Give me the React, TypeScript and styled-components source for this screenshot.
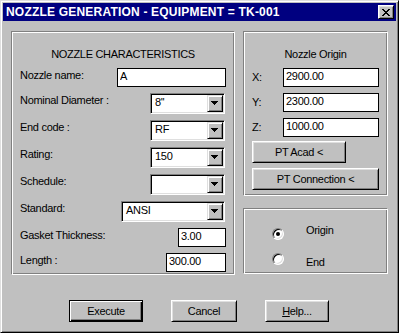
import React from 'react'
import styled, { createGlobalStyle } from 'styled-components'

const GlobalStyle = createGlobalStyle`
  html, body {
    margin: 0;
    padding: 0;
    background: #c0c0c0;
  }
  * {
    box-sizing: border-box;
  }
`

const Window = styled.div`
  width: 399px;
  height: 333px;
  display: flex;
  flex-direction: column;
  padding: 2px;
  background: #c0c0c0;
  border: 1px solid;
  border-color: #dfdfdf #000 #000 #dfdfdf;
  box-shadow: inset 1px 1px #fff, inset -1px -1px #808080;
  font-family: 'Liberation Sans', Arial, sans-serif;
  font-size: 11px;
  letter-spacing: -0.3px;
  color: #000;
`

const TitleBar = styled.div`
  height: 18px;
  flex: none;
  display: flex;
  align-items: center;
  padding: 0 2px 0 3px;
  background: #000080;
`

const Title = styled.span`
  flex: 1;
  color: #fff;
  font-size: 12px;
  font-weight: bold;
  letter-spacing: 0.2px;
  line-height: 18px;
  white-space: nowrap;
`

const CloseButton = styled.button`
  width: 16px;
  height: 14px;
  padding: 0;
  display: flex;
  align-items: center;
  justify-content: center;
  background: #c0c0c0;
  border: 1px solid;
  border-color: #fff #000 #000 #fff;
  box-shadow: inset 1px 1px #dfdfdf, inset -1px -1px #808080;
`

const Body = styled.div`
  flex: 1;
  display: flex;
  flex-direction: column;
  padding: 10px 8px 0;
`

const Columns = styled.div`
  display: flex;
  gap: 8px;
`

const RightColumn = styled.div`
  width: 145px;
  flex: none;
  display: flex;
  flex-direction: column;
  gap: 12px;
`

// etched frame, no caption on the line
const GroupBox = styled.div<{ $width?: number; $height: number; $pad: string }>`
  width: ${p => (p.$width ? `${p.$width}px` : 'auto')};
  height: ${p => p.$height}px;
  flex: none;
  display: flex;
  flex-direction: column;
  padding: ${p => p.$pad};
  border: 1px solid;
  border-color: #808080 #fff #fff #808080;
  box-shadow: inset 1px 1px #fff, inset -1px -1px #808080;
`

const Heading = styled.div`
  text-align: center;
  line-height: 13px;
  margin-bottom: 7px;
  white-space: nowrap;
`

const Fields = styled.div`
  display: flex;
  flex-direction: column;
  gap: 6px;
`

const FieldRow = styled.div<{ $center?: boolean }>`
  display: flex;
  align-items: ${p => (p.$center ? 'center' : 'flex-start')};
`

const Label = styled.span<{ $top?: number }>`
  line-height: 13px;
  padding-top: ${p => p.$top ?? 0}px;
  white-space: nowrap;
`

const TextBox = styled.input<{ $width: number }>`
  width: ${p => p.$width}px;
  height: 19px;
  flex: none;
  margin: 0 0 0 auto;
  padding: 0 1px 4px 2px;
  border: 1px solid #000;
  border-radius: 0;
  background: #fff;
  outline: none;
  font: inherit;
  letter-spacing: inherit;
  color: #000;
`

const Combo = styled.div<{ $width: number }>`
  width: ${p => p.$width}px;
  height: 21px;
  flex: none;
  margin: 0 1px 0 auto;
  padding: 1px;
  display: flex;
  background: #fff;
  border: 1px solid;
  border-color: #808080 #fff #fff #808080;
  box-shadow: inset 1px 1px #000, inset -1px -1px #dfdfdf;
`

const ComboValue = styled.span`
  flex: 1;
  padding: 1px 0 0 3px;
  line-height: 13px;
  white-space: nowrap;
`

const ComboButton = styled.span`
  width: 16px;
  height: 17px;
  flex: none;
  display: flex;
  align-items: flex-start;
  padding: 5px 0 0 3px;
  background: #c0c0c0;
  border: 1px solid;
  border-color: #dfdfdf #000 #000 #dfdfdf;
  box-shadow: inset 1px 1px #fff, inset -1px -1px #808080;

  svg {
    display: block;
  }
`

const ButtonStack = styled.div`
  display: flex;
  flex-direction: column;
  gap: 5px;
  margin-top: 4px;
`

const PushButton = styled.button<{ $width: number; $default?: boolean }>`
  width: ${p => p.$width}px;
  height: 22px;
  flex: none;
  padding: 0;
  background: #c0c0c0;
  font: inherit;
  letter-spacing: inherit;
  color: #000;
  border: 1px solid;
  border-color: ${p => (p.$default ? '#000' : '#fff #000 #000 #fff')};
  box-shadow: ${p =>
    p.$default
      ? 'inset 1px 1px #fff, inset -1px -1px #000, inset -2px -2px #808080'
      : 'inset 1px 1px #dfdfdf, inset -1px -1px #808080'};
`

const RadioList = styled.div`
  display: flex;
  flex-direction: column;
  gap: 13px;
`

const RadioRow = styled.div`
  display: flex;
  align-items: flex-start;
  height: 12px;
`

const RadioDot = styled.span<{ $checked?: boolean }>`
  width: 12px;
  height: 12px;
  flex: none;
  display: flex;
  align-items: center;
  justify-content: center;
  border-radius: 50%;
  background: #fff;
  border: 1px solid;
  border-color: #808080 #fff #fff #808080;
  box-shadow: inset 1px 1px #000, inset -1px -1px #dfdfdf;

  &::after {
    content: '';
    display: ${p => (p.$checked ? 'block' : 'none')};
    width: 4px;
    height: 4px;
    border-radius: 50%;
    background: #000;
  }
`

const RadioText = styled.span<{ $shift: number }>`
  margin: ${p => p.$shift}px 0 0 22px;
  line-height: 13px;
`

const ButtonRow = styled.div`
  display: flex;
  gap: 28px;
  margin-top: 25px;
  padding-left: 58px;
`

const CloseGlyph = () => (
  <svg width="8" height="7" viewBox="0 0 8 7" shapeRendering="crispEdges">
    <path
      fill="#000"
      d="M0 0h2v1H0zM6 0h2v1H6zM1 1h2v1H1zM5 1h2v1H5zM2 2h4v1H2zM3 3h2v1H3zM2 4h4v1H2zM1 5h2v1H1zM5 5h2v1H5zM0 6h2v1H0zM6 6h2v1H6z"
    />
  </svg>
)

const DownArrow = () => (
  <svg width="7" height="4" viewBox="0 0 7 4" shapeRendering="crispEdges">
    <path fill="#000" d="M0 0h7v1H0zM1 1h5v1H1zM2 2h3v1H2zM3 3h1v1H3z" />
  </svg>
)

type Field = {
  label: string
  kind: 'input' | 'select'
  value: string
  width: number
}

const characteristics: Field[] = [
  { label: 'Nozzle name:', kind: 'input', value: 'A', width: 109 },
  { label: 'Nominal Diameter :', kind: 'select', value: "8''", width: 75 },
  { label: 'End code :', kind: 'select', value: 'RF', width: 75 },
  { label: 'Rating:', kind: 'select', value: '150', width: 75 },
  { label: 'Schedule:', kind: 'select', value: '', width: 75 },
  { label: 'Standard:', kind: 'select', value: 'ANSI', width: 104 },
  { label: 'Gasket Thickness:', kind: 'input', value: '3.00', width: 48 },
  { label: 'Length :', kind: 'input', value: '300.00', width: 60 },
]

const origin = [
  { label: 'X:', value: '2900.00' },
  { label: 'Y:', value: '2300.00' },
  { label: 'Z:', value: '1000.00' },
]

const App = () => {
  return (
    <>
      <GlobalStyle />
      <Window>
        <TitleBar>
          <Title>NOZZLE GENERATION - EQUIPMENT = TK-001</Title>
          <CloseButton aria-label="Close">
            <CloseGlyph />
          </CloseButton>
        </TitleBar>

        <Body>
          <Columns>
            <GroupBox $width={224} $height={244} $pad="16px 8px 0">
              <Heading>NOZZLE CHARACTERISTICS</Heading>
              <Fields>
                {characteristics.map(f => (
                  <FieldRow key={f.label}>
                    <Label $top={1}>{f.label}</Label>
                    {f.kind === 'input' ? (
                      <TextBox $width={f.width} defaultValue={f.value} readOnly />
                    ) : (
                      <Combo $width={f.width}>
                        <ComboValue>{f.value}</ComboValue>
                        <ComboButton>
                          <DownArrow />
                        </ComboButton>
                      </Combo>
                    )}
                  </FieldRow>
                ))}
              </Fields>
            </GroupBox>

            <RightColumn>
              <GroupBox $height={165} $pad="16px 8px 0">
                <Heading>Nozzle Origin</Heading>
                <Fields>
                  {origin.map(o => (
                    <FieldRow key={o.label} $center>
                      <Label>{o.label}</Label>
                      <TextBox $width={96} defaultValue={o.value} readOnly />
                    </FieldRow>
                  ))}
                </Fields>
                <ButtonStack>
                  <PushButton $width={94}>PT Acad &lt;</PushButton>
                  <PushButton $width={127}>PT Connection &lt;</PushButton>
                </ButtonStack>
              </GroupBox>

              <GroupBox $height={66} $pad="19px 0 0 28px">
                <RadioList>
                  <RadioRow>
                    <RadioDot $checked />
                    <RadioText $shift={-4}>Origin</RadioText>
                  </RadioRow>
                  <RadioRow>
                    <RadioDot />
                    <RadioText $shift={3}>End</RadioText>
                  </RadioRow>
                </RadioList>
              </GroupBox>
            </RightColumn>
          </Columns>

          <ButtonRow>
            <PushButton $width={74} $default>
              Execute
            </PushButton>
            <PushButton $width={66}>Cancel</PushButton>
            <PushButton $width={64}>
              <u>H</u>elp...
            </PushButton>
          </ButtonRow>
        </Body>
      </Window>
    </>
  )
}

export default App
